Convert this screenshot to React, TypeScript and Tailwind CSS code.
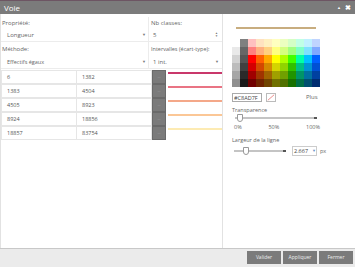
import { useState } from "react";

const rows = [
    { from: "6", to: "1382", line: "bg-[#c9386b]" },
    { from: "1383", to: "4504", line: "bg-[#e97484]" },
    { from: "4505", to: "8923", line: "bg-[#f4a889]" },
    { from: "8924", to: "18856", line: "bg-[#fbc796]" },
    { from: "18857", to: "83754", line: "bg-[#fdebb3]" },
];

// palette, row by row: light gray column, dark gray column, then hues
const palette = [
    ["bg-white", "bg-[#808080]", "bg-[#ffc0c0]", "bg-[#ffe2c0]", "bg-[#fff0c0]", "bg-[#ffffc0]", "bg-[#ecffc0]", "bg-[#d4ffc6]", "bg-[#c0ffe6]", "bg-[#c0f0ff]", "bg-[#c0d4ff]"],
    ["bg-[#e9e9e9]", "bg-[#666666]", "bg-[#ff8080]", "bg-[#ffb080]", "bg-[#ffd080]", "bg-[#ffff80]", "bg-[#d4ff80]", "bg-[#a0ff80]", "bg-[#80ffc8]", "bg-[#80e0ff]", "bg-[#80a8ff]"],
    ["bg-[#d2d2d2]", "bg-[#555555]", "bg-[#ff0000]", "bg-[#ff6000]", "bg-[#ffa800]", "bg-[#ffff00]", "bg-[#b0ff00]", "bg-[#40ff00]", "bg-[#00ffa8]", "bg-[#00c0ff]", "bg-[#0060ff]"],
    ["bg-[#bcbcbc]", "bg-[#404040]", "bg-[#d40000]", "bg-[#d44800]", "bg-[#d48800]", "bg-[#d4d400]", "bg-[#90d400]", "bg-[#30c000]", "bg-[#00c088]", "bg-[#0094d4]", "bg-[#0050d4]"],
    ["bg-[#a6a6a6]", "bg-[#2a2a2a]", "bg-[#a00000]", "bg-[#a03400]", "bg-[#a06400]", "bg-[#a0a000]", "bg-[#70a000]", "bg-[#209400]", "bg-[#009468]", "bg-[#0070a0]", "bg-[#0040a0]"],
    ["bg-[#909090]", "bg-[#1a1a1a]", "bg-[#700000]", "bg-[#702400]", "bg-[#704400]", "bg-[#707000]", "bg-[#507000]", "bg-[#187000]", "bg-[#007048]", "bg-[#005070]", "bg-[#002c70]"],
];

function Arrow() {
    return <span className="text-[4px] text-[#777] leading-none">▼</span>
}

function Slider({ width, pos }: { width: string, pos: string }) {
    return (
        <div className={`relative h-[8px] ${width} flex items-center`}>
            <div className="h-[2px] w-full bg-[#c4c4c4]"></div>
            <div className="absolute right-0 top-[3px] h-[2px] w-[3px] bg-[#555]"></div>
            <div className={`absolute top-0 ${pos} h-[8px] w-[6px] bg-white border border-[#999] rounded-b-[3px]`}></div>
        </div>
    )
}

export default function App() {
    const [hex, setHex] = useState("#C8AD7F");

    return (
        <div className="w-[355px] h-[267px] bg-white flex flex-col text-[#666] text-[6px] whitespace-nowrap font-['Open_Sans','Liberation_Sans',sans-serif] overflow-hidden">
            {/* title bar */}
            <div className="h-[14px] shrink-0 bg-[#7b7b7b] border-t border-[#6d5563] flex items-center justify-between pl-[4px] pr-[4px]">
                <span className="text-white text-[8px]">Voie</span>
                <div className="flex items-center gap-[4px] text-white">
                    <span className="text-[4px] leading-none">▲</span>
                    <span className="text-[7px] leading-none font-bold">✖</span>
                </div>
            </div>

            <div className="flex h-[235px] shrink-0 border-b border-[#c8c8c8]">
                {/* left panel */}
                <div className="w-[223px] shrink-0 border-l border-r border-[#e2e2e2] pt-[3px] flex flex-col">
                    <div className="flex">
                        <div className="w-[147px] flex flex-col">
                            <div className="h-[12px] flex items-center pl-[1px]">Propriété:</div>
                            <div className="h-[13px] flex items-center justify-between pl-[6px] pr-[2px] border-b border-[#ececec]">
                                <span>Longueur</span><Arrow />
                            </div>
                            <div className="h-[14px] flex items-center pl-[1px]">Méthode:</div>
                            <div className="h-[13px] flex items-center justify-between pl-[6px] pr-[2px] border-b border-[#ececec]">
                                <span className="text-[5.5px]">Effectifs égaux</span><Arrow />
                            </div>
                        </div>
                        <div className="flex-1 flex flex-col border-l border-[#ececec]">
                            <div className="h-[12px] flex items-center pl-[2px]">Nb classes:</div>
                            <div className="h-[13px] flex items-center justify-between pl-[4px] pr-[4px] border-b border-[#ececec]">
                                <span>5</span>
                                <span className="flex flex-col text-[3px] leading-[3px] text-[#777]"><span>▲</span><span>▼</span></span>
                            </div>
                            <div className="h-[14px] flex items-center pl-[2px] text-[5.5px]">Intervalles (écart-type):</div>
                            <div className="h-[13px] flex items-center justify-between pl-[4px] pr-[3px] border-b border-[#ececec]">
                                <span>1 int.</span><Arrow />
                            </div>
                        </div>
                    </div>

                    <div className="flex flex-col mt-[1px] text-[5.5px] text-[#555]">
                        {rows.map((r) => (
                            <div key={r.from} className="flex h-[14px] items-stretch">
                                <div className="w-[76px] border border-[#e6e6e6] flex items-center pl-[5px]">{r.from}</div>
                                <div className="w-[75px] border border-l-0 border-[#e6e6e6] flex items-center pl-[5px]">{r.to}</div>
                                <div className="w-[14px] bg-[#7b7b7b] border border-[#6a6a6a] flex items-center justify-center text-[#aaa] text-[4px]">…</div>
                                <div className="flex-1 pl-[2px] pt-[2px]">
                                    <div className={`h-[2px] w-full ${r.line}`}></div>
                                </div>
                            </div>
                        ))}
                    </div>
                </div>

                {/* right panel */}
                <div className="flex-1 flex flex-col pl-[9px]">
                    <div className="mt-[13px] ml-[4px] h-[2px] w-[80px] bg-[#c8ad7f]"></div>

                    <div className="mt-[10px] flex flex-col w-[88px]">
                        {palette.map((row, i) => (
                            <div key={i} className="flex">
                                {row.map((c, j) => (
                                    <div key={j} className={`h-[8px] w-[8px] ${c}`}></div>
                                ))}
                            </div>
                        ))}
                    </div>

                    <div className="mt-[6px] flex items-center">
                        <input
                            className="w-[30px] h-[9px] border border-[#aaa] text-[5.5px] text-[#444] px-[1px] outline-none"
                            value={hex}
                            onChange={(e) => setHex(e.target.value)}
                            title="Couleur"
                        />
                        <svg width="10" height="9" className="ml-[4px] border border-[#bbb]" viewBox="0 0 10 9">
                            <line x1="1" y1="8" x2="9" y2="1" stroke="#e24a4a" strokeWidth="0.8" />
                        </svg>
                        <span className="ml-[30px] text-[#666]">Plus</span>
                    </div>

                    <div className="mt-[4px] text-[5.5px]">Transparence</div>
                    <div className="ml-[3px]"><Slider width="w-[82px]" pos="left-[2px]" /></div>
                    <div className="flex justify-between w-[86px] ml-[2px] text-[5.5px] mt-[1px]">
                        <span>0%</span><span>50%</span><span>100%</span>
                    </div>

                    <div className="mt-[4px] text-[5.5px]">Largeur de la ligne</div>
                    <div className="flex items-center mt-[2px]">
                        <div className="ml-[2px]"><Slider width="w-[52px]" pos="left-[9px]" /></div>
                        <div className="ml-[6px] h-[10px] w-[25px] border border-[#ccc] flex items-center justify-between pl-[1px] text-[5.5px] text-[#444]">
                            <span>2.667</span>
                            <span className="text-[4px] text-[#6a8fc8]">▼</span>
                        </div>
                        <span className="ml-[3px] text-[5.5px]">px</span>
                    </div>
                </div>
            </div>

            {/* footer */}
            <div className="flex-1 bg-[#ebebeb] flex items-center justify-end gap-[2px] pr-[2px] pb-[1px]">
                <button className="h-[13px] w-[34px] bg-[#7b7b7b] text-[#eee] text-[5px]">Valider</button>
                <button className="h-[13px] w-[34px] bg-[#7b7b7b] text-[#eee] text-[5px]">Appliquer</button>
                <button className="h-[13px] w-[34px] bg-[#7b7b7b] text-[#eee] text-[5px]">Fermer</button>
            </div>
        </div>
    )
}
